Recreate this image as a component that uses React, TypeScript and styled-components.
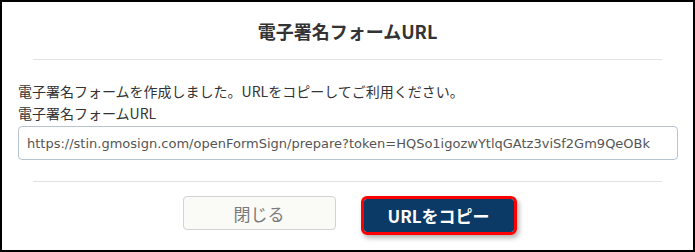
import React from 'react';
import styled, { createGlobalStyle } from 'styled-components';

const GlobalStyle = createGlobalStyle`
  html, body {
    margin: 0;
    padding: 0;
    background: #fff;
  }
  * {
    box-sizing: border-box;
  }
`;

const cjk = `"Noto Sans CJK JP", "Noto Sans", sans-serif`;

const Frame = styled.div`
  width: 695px;
  height: 252px;
  border: 2px solid #000;
  background: #fff;
  display: flex;
  flex-direction: column;
  font-family: ${cjk};
  color: #333;
`;

const Header = styled.div`
  height: 57px;
  display: flex;
  align-items: center;
  justify-content: center;
`;

const Title = styled.h1`
  margin: 0;
  font-size: 18px;
  font-weight: 700;
  line-height: 26px;
  color: #333;
`;

const Divider = styled.hr`
  border: none;
  height: 1px;
  background: #e3e3e3;
  margin: 0 31px;
`;

const Body = styled.div`
  padding: 20px 16px 0;
  display: flex;
  flex-direction: column;
`;

const Message = styled.p`
  margin: 0;
  font-size: 14px;
  line-height: 22px;
  color: #333;
`;

const Label = styled.label`
  font-size: 14px;
  line-height: 22px;
  color: #333;
`;

const UrlInput = styled.input`
  margin-top: 2px;
  width: 660px;
  height: 34px;
  border: 1px solid #b7c4d0;
  border-radius: 4px;
  padding: 0 8px;
  font-family: "DejaVu Sans", "Liberation Sans", sans-serif;
  font-size: 13px;
  color: #555;
  background: #fff;
  outline: none;
`;

const Footer = styled.div`
  margin-top: 21px;
  display: flex;
  flex-direction: column;
`;

const ButtonRow = styled.div`
  margin-top: 14px;
  display: flex;
  justify-content: center;
  align-items: flex-start;
  gap: 25px;
  padding-left: 4px;
`;

const CloseButton = styled.button`
  width: 153px;
  height: 34px;
  border: 1px solid #d3d3d3;
  border-radius: 4px;
  background: #fafaf7;
  color: #7a7a7a;
  font-family: ${cjk};
  font-size: 17px;
  cursor: pointer;
`;

const Highlight = styled.span`
  display: inline-flex;
  border: 3px solid #ff0000;
  border-radius: 6px;
  box-shadow: 2px 3px 5px rgba(0, 0, 0, 0.3);
`;

const CopyButton = styled.button`
  width: 150px;
  height: 33px;
  border: none;
  border-radius: 3px;
  background: #0b3a66;
  color: #fff;
  font-family: ${cjk};
  font-weight: 700;
  font-size: 17px;
  cursor: pointer;
`;

export default function App() {
  const url = 'https://stin.gmosign.com/openFormSign/prepare?token=HQSo1igozwYtlqGAtz3viSf2Gm9QeOBk';
  return (
    <>
      <GlobalStyle />
      <Frame>
        <Header>
          <Title>電子署名フォームURL</Title>
        </Header>
        <Divider />
        <Body>
          <Message>電子署名フォームを作成しました。URLをコピーしてご利用ください。</Message>
          <Label htmlFor="form-url">電子署名フォームURL</Label>
          <UrlInput id="form-url" readOnly value={url} />
        </Body>
        <Footer>
          <Divider />
          <ButtonRow>
            <CloseButton>閉じる</CloseButton>
            <Highlight>
              <CopyButton>URLをコピー</CopyButton>
            </Highlight>
          </ButtonRow>
        </Footer>
      </Frame>
    </>
  );
}
